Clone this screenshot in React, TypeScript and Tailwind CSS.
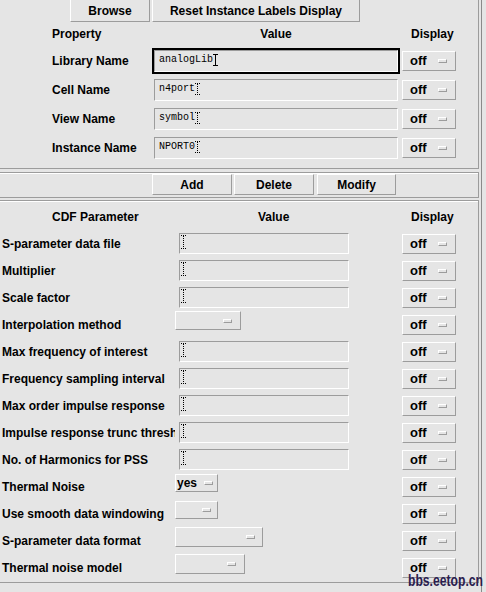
import React from "react";

const raised =
  "border border-t-white border-l-white border-b-[#9c9c9c] border-r-[#9c9c9c]";
const sunken =
  "border border-t-[#9c9c9c] border-l-[#9c9c9c] border-b-white border-r-white";

function Indicator() {
  return <span className={`block w-[9px] h-[4px] bg-[#e5e5e5] ${raised}`} />;
}

function IBeam({ solid = false, h = 13 }: { solid?: boolean; h?: number }) {
  return (
    <svg width="5" height={h} viewBox={`0 0 5 ${h}`} className="shrink-0">
      <line x1="0" y1="0.5" x2="5" y2="0.5" stroke="#000" strokeWidth="1" strokeDasharray={solid ? undefined : "1 1"} />
      <line x1="0" y1={h - 0.5} x2="5" y2={h - 0.5} stroke="#000" strokeWidth="1" strokeDasharray={solid ? undefined : "1 1"} />
      <line x1="2.5" y1="1" x2="2.5" y2={h - 1} stroke="#000" strokeWidth="1" strokeDasharray={solid ? undefined : "1 1"} />
    </svg>
  );
}

function OffButton() {
  return (
    <div className={`w-[54px] h-[20px] flex items-center pl-[7px] pr-[8px] ${raised}`}>
      <span className="text-[13px] font-bold leading-none">off</span>
      <span className="ml-auto">
        <Indicator />
      </span>
    </div>
  );
}

function Button({ label, w }: { label: string; w: string }) {
  return (
    <div className={`${w} h-full flex items-center justify-center text-[12px] font-bold ${raised}`}>
      {label}
    </div>
  );
}

const props = [
  { label: "Library Name", value: "analogLib", focus: true },
  { label: "Cell Name", value: "n4port" },
  { label: "View Name", value: "symbol" },
  { label: "Instance Name", value: "NPORT0" },
];

type Cdf =
  | { label: string; kind: "text" }
  | { label: string; kind: "menu"; w: string; h: string; text?: string; mr: string };

const cdf: Cdf[] = [
  { label: "S-parameter data file", kind: "text" },
  { label: "Multiplier", kind: "text" },
  { label: "Scale factor", kind: "text" },
  { label: "Interpolation method", kind: "menu", w: "w-[66px]", h: "h-[19px]", mr: "mr-[8px]" },
  { label: "Max frequency of interest", kind: "text" },
  { label: "Frequency sampling interval", kind: "text" },
  { label: "Max order impulse response", kind: "text" },
  { label: "Impulse response trunc threshold", kind: "text" },
  { label: "No. of Harmonics for PSS", kind: "text" },
  { label: "Thermal Noise", kind: "menu", w: "w-[43px]", h: "h-[18px]", text: "yes", mr: "mr-[4px]" },
  { label: "Use smooth data windowing", kind: "menu", w: "w-[43px]", h: "h-[18px]", mr: "mr-[6px]" },
  { label: "S-parameter data format", kind: "menu", w: "w-[88px]", h: "h-[20px]", mr: "mr-[7px]" },
  { label: "Thermal noise model", kind: "menu", w: "w-[70px]", h: "h-[20px]", mr: "mr-[8px]" },
];

export default function App() {
  return (
    <div className="w-[486px] h-[592px] bg-[#e5e5e5] relative overflow-hidden flex font-['Liberation_Sans',Arial,sans-serif] text-black">
      <div className="w-[479px] flex flex-col">
        {/* property panel */}
        <div className="h-[169px] border-r border-b border-[#9c9c9c] flex flex-col">
          <div className="h-[22px] flex gap-[2px] pl-[70px]">
            <div className="w-[80px] h-full flex items-center justify-center text-[12px] font-bold border-l border-l-white border-b border-b-[#9c9c9c] border-r border-r-[#9c9c9c]">
              Browse
            </div>
            <div className="w-[208px] h-full flex items-center justify-center text-[12px] font-bold border-l border-l-white border-b border-b-[#9c9c9c] border-r border-r-[#9c9c9c]">
              Reset Instance Labels Display
            </div>
          </div>
          <div className="h-[24px] flex items-center text-[12px] font-bold">
            <div className="w-[152px] pl-[52px]">Property</div>
            <div className="w-[248px] text-center">Value</div>
            <div className="ml-[2px] pl-[9px]">Display</div>
          </div>
          {props.map((p) => (
            <div key={p.label} className="h-[29px] flex items-center">
              <div className="w-[152px] pl-[52px] text-[12px] font-bold">{p.label}</div>
              <div className={`w-[248px] h-[26px] ${p.focus ? "border-2 border-black" : "p-[2px]"}`}>
                <div className={`w-full h-full flex items-start pt-[3px] pl-[4px] font-['Liberation_Mono',monospace] text-[10px] leading-[12px] ${sunken}`}>
                  <span>{p.value}</span>
                  <IBeam solid={p.focus} h={12} />
                </div>
              </div>
              <div className="ml-[2px]">
                <OffButton />
              </div>
            </div>
          ))}
        </div>

        {/* button panel */}
        <div className="mt-[3px] h-[26px] border-t border-b border-r border-[#9c9c9c] shadow-[inset_0_1px_0_white] pt-[1px] pb-[1px]">
          <div className="h-[21px] flex pl-[152px]">
            <Button label="Add" w="w-[80px]" />
            <div className="w-[2px]" />
            <Button label="Delete" w="w-[80px]" />
            <div className="w-[3px]" />
            <Button label="Modify" w="w-[79px]" />
          </div>
        </div>

        {/* CDF panel */}
        <div className="mt-[2px] border-t border-b border-r border-[#9c9c9c] shadow-[inset_0_1px_0_white] pb-[1px]">
          <div className="h-[29px] pt-[3px] flex items-center text-[12px] font-bold">
            <div className="w-[175px] pl-[52px]">CDF Parameter</div>
            <div className="w-[227px] pl-[83px]">Value</div>
            <div className="pl-[9px]">Display</div>
          </div>
          {cdf.map((c) => (
            <div key={c.label} className="h-[27px] flex items-center">
              <div className="w-[175px] pl-[2px] overflow-hidden whitespace-nowrap text-[12px] font-bold">
                {c.label}
              </div>
              <div className="w-[227px] flex items-center">
                {c.kind === "text" ? (
                  <div className={`ml-[4px] w-[170px] h-[21px] flex items-start pt-[1px] pl-[1px] ${sunken}`}>
                    <IBeam h={14} />
                  </div>
                ) : (
                  <div className={`${c.w} ${c.h} mb-[8px] flex items-center ${raised}`}>
                    {c.text && <span className="pl-[1px] text-[12px] font-bold leading-none">{c.text}</span>}
                    <span className={`ml-auto ${c.mr}`}>
                      <Indicator />
                    </span>
                  </div>
                )}
              </div>
              <OffButton />
            </div>
          ))}
        </div>
      </div>
      <div className="w-[2px]" />
      <div className="w-[1px] h-full bg-[#8a8a8a]" />

      <div className="absolute left-[408px] top-[572px] text-[16px] font-bold text-[#2b1d4f] leading-[18px] scale-x-[0.76] origin-left whitespace-nowrap">
        bbs.eetop.cn
      </div>
    </div>
  );
}
